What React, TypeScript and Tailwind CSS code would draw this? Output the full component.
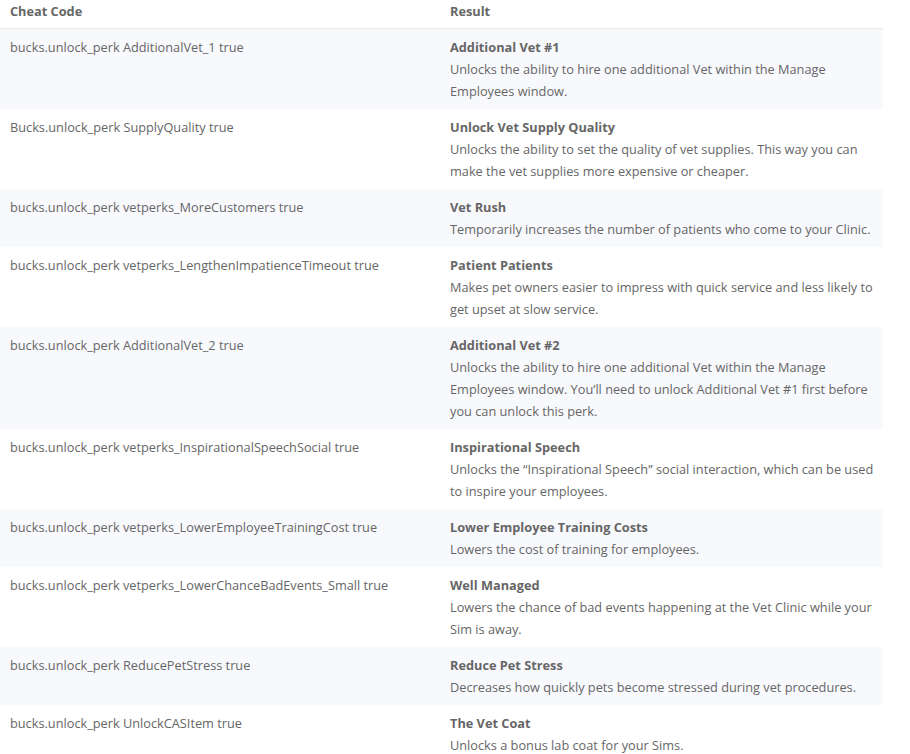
const perks = [
  {
    code: "bucks.unlock_perk AdditionalVet_1 true",
    title: "Additional Vet #1",
    desc: "Unlocks the ability to hire one additional Vet within the Manage Employees window.",
  },
  {
    code: "Bucks.unlock_perk SupplyQuality true",
    title: "Unlock Vet Supply Quality",
    desc: "Unlocks the ability to set the quality of vet supplies. This way you can make the vet supplies more expensive or cheaper.",
  },
  {
    code: "bucks.unlock_perk vetperks_MoreCustomers true",
    title: "Vet Rush",
    desc: "Temporarily increases the number of patients who come to your Clinic.",
  },
  {
    code: "bucks.unlock_perk vetperks_LengthenImpatienceTimeout true",
    title: "Patient Patients",
    desc: "Makes pet owners easier to impress with quick service and less likely to get upset at slow service.",
  },
  {
    code: "bucks.unlock_perk AdditionalVet_2 true",
    title: "Additional Vet #2",
    desc: "Unlocks the ability to hire one additional Vet within the Manage Employees window. You\u2019ll need to unlock Additional Vet #1 first before you can unlock this perk.",
  },
  {
    code: "bucks.unlock_perk vetperks_InspirationalSpeechSocial true",
    title: "Inspirational Speech",
    desc: "Unlocks the \u201cInspirational Speech\u201d social interaction, which can be used to inspire your employees.",
  },
  {
    code: "bucks.unlock_perk vetperks_LowerEmployeeTrainingCost true",
    title: "Lower Employee Training Costs",
    desc: "Lowers the cost of training for employees.",
  },
  {
    code: "bucks.unlock_perk vetperks_LowerChanceBadEvents_Small true",
    title: "Well Managed",
    desc: "Lowers the chance of bad events happening at the Vet Clinic while your Sim is away.",
  },
  {
    code: "bucks.unlock_perk ReducePetStress true",
    title: "Reduce Pet Stress",
    desc: "Decreases how quickly pets become stressed during vet procedures.",
  },
  {
    code: "bucks.unlock_perk UnlockCASItem true",
    title: "The Vet Coat",
    desc: "Unlocks a bonus lab coat for your Sims.",
  },
]

export default function App() {
  return (
    <div className="min-h-screen bg-white font-['Open_Sans',sans-serif] text-[12.75px] leading-[22px] text-[#666]">
      <table className="w-[883px] table-fixed border-collapse">
        <thead>
          {/* Header row */}
          <tr className="border-b border-[#ececec]">
            <th className="w-[440px] px-[10px] pt-0 pb-[6px] text-left font-bold text-[#666]">Cheat Code</th>
            <th className="px-[10px] pt-0 pb-[6px] text-left font-bold text-[#666]">Result</th>
          </tr>
        </thead>
        <tbody>
          {perks.map((perk, index) => (
            <tr key={index} className={index % 2 === 0 ? "bg-[#f8f9fd]" : "bg-white"}>
              <td className="px-[10px] py-[7px] align-top">{perk.code}</td>
              <td className="pl-[10px] pr-[6px] py-[7px] align-top">
                <div className="font-bold">{perk.title}</div>
                <div>{perk.desc}</div>
              </td>
            </tr>
          ))}
        </tbody>
      </table>
    </div>
  )
}
